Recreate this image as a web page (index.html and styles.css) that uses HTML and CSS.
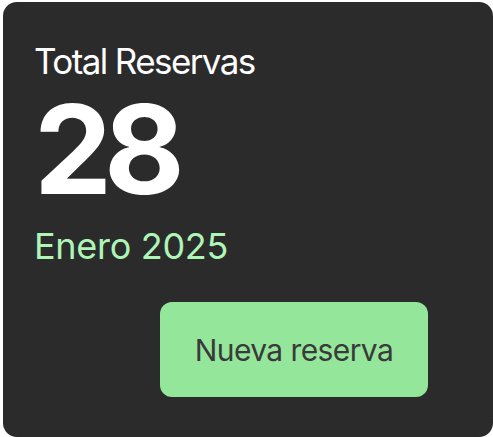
FILE: index.html
```html
<!DOCTYPE html>
<html lang="es">
<head>
<meta charset="utf-8">
<link rel="stylesheet" href="styles.css">
</head>
<body>
<div class="card">
  <div class="title">Total Reservas</div>
  <div class="count">28</div>
  <div class="period">Enero 2025</div>
  <button class="action">Nueva reserva</button>
</div>
</body>
</html>
```

FILE: styles.css
```css
html, body {
  margin: 0;
  padding: 0;
  background: #ffffff;
}
body {
  font-family: "Inter", "Noto Sans", sans-serif;
}
.card {
  box-sizing: border-box;
  margin: 2px 0 0 3px;
  width: 490px;
  height: 435px;
  background: #2b2b2b;
  border-radius: 14px;
  padding: 39px 32px 0 31px;
  display: flex;
  flex-direction: column;
  align-items: flex-start;
}
.title {
  color: #ffffff;
  font-size: 35px;
  line-height: 40px;
  letter-spacing: -1.6px;
}
.count {
  color: #ffffff;
  font-size: 124px;
  font-weight: 700;
  line-height: 124px;
  margin-top: 6px;
  margin-left: 0;
  letter-spacing: -8px;
}
.period {
  color: #aef5b7;
  font-size: 36px;
  line-height: 40px;
  margin-top: 15px;
  letter-spacing: -0.3px;
}
.action {
  align-self: flex-end;
  margin: 36px 33px 0 0;
  width: 268px;
  height: 95px;
  border: none;
  border-radius: 12px;
  background: #94e69b;
  color: #3a3a3a;
  font-family: "Inter", "Noto Sans", sans-serif;
  font-size: 30px;
  letter-spacing: -0.6px;
  padding: 0;
}
```
